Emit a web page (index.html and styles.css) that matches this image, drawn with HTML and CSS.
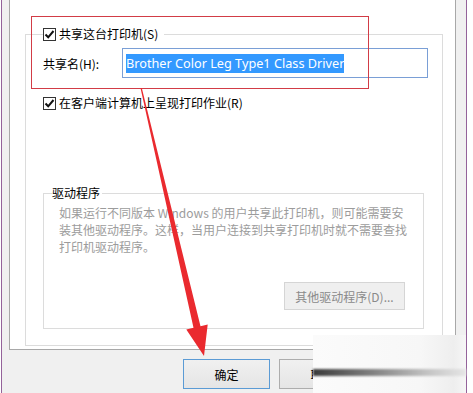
FILE: index.html
```html
<!DOCTYPE html>
<html lang="zh-CN">
<head>
    <meta charset="UTF-8">
    <title>打印机属性 - 共享</title>
    <link rel="stylesheet" href="styles.css">
</head>
<body>
    <div class="screen">
        <div class="dialog">
            <div class="panel">
                <fieldset class="share-frame">
                    <legend class="check">
                        <span class="box"><svg width="11" height="11" viewBox="0 0 11 11"><path d="M1.5 5.5 L4.2 8.3 L9.5 2" fill="none" stroke="#111" stroke-width="2"/></svg></span>
                        共享这台打印机(S)
                    </legend>
                    <div class="name-row">
                        <label class="name-label" for="shareName">共享名(H):</label>
                        <div class="name-input" id="shareName"><span class="selected">Brother Color Leg Type1 Class Driver</span></div>
                    </div>
                    <div class="check render">
                        <span class="box"><svg width="11" height="11" viewBox="0 0 11 11"><path d="M1.5 5.5 L4.2 8.3 L9.5 2" fill="none" stroke="#111" stroke-width="2"/></svg></span>
                        在客户端计算机上呈现打印作业(R)
                    </div>
                    <fieldset class="driver-frame">
                        <legend>驱动程序</legend>
                        <p class="driver-text">如果运行不同版本 Windows 的用户共享此打印机，则可能需要安装其他驱动程序。这样，当用户连接到共享打印机时就不需要查找打印机驱动程序。</p>
                        <div class="driver-actions">
                            <button class="other-btn" disabled>其他驱动程序(D)...</button>
                        </div>
                    </fieldset>
                </fieldset>
            </div>
            <div class="buttons">
                <button class="btn default">确定</button>
                <button class="btn">取消</button>
                <button class="btn">应用(A)</button>
            </div>
        </div>

        <div class="annot-box"></div>
        <svg class="arrow" width="473" height="393" viewBox="0 0 473 393">
            <polygon points="140.5,88 141.8,88 200.5,326.2 207.7,324.4 204,356 186.3,329.6 193.5,327.8" fill="#ea2a2f"/>
        </svg>
        <div class="watermark"><div class="wm-bar"></div></div>
    </div>
</body>
</html>
```

FILE: styles.css
```css
* {
    box-sizing: border-box;
}
body {
    margin: 0;
    background: #fff;
    font-family: "Noto Sans CJK SC", "Noto Sans", sans-serif;
    font-size: 12px;
    color: #000;
    overflow: hidden;
}
.screen {
    position: relative;
    width: 473px;
    height: 393px;
    overflow: hidden;
}
.dialog {
    margin-left: 1px;
    width: 466px;
    height: 393px;
    background: #f0f0f0;
    border-left: 1px solid #94629a;
    border-right: 1px solid #94629a;
    padding-left: 7px;
}
.panel {
    width: 447px;
    height: 350px;
    background: #fff;
    border: 1px solid #a8a8a8;
    border-top: 0;
    padding: 26px 12px 0 15px;
}
.share-frame {
    margin: 0;
    padding: 0 14px 0 17px;
    border: 1px solid #dcdcdc;
    height: 320px;
    min-width: 0;
}
.share-frame > legend {
    padding: 0 6px 0 0;
}
.check {
    display: flex;
    align-items: center;
    gap: 3px;
    height: 16px;
    line-height: 16px;
    white-space: nowrap;
}
.box {
    width: 13px;
    height: 13px;
    border: 1px solid #333;
    background: #fff;
    display: flex;
    align-items: center;
    justify-content: center;
}
.name-row {
    display: flex;
    align-items: center;
    margin-top: 6px;
}
.name-label {
    width: 79px;
}
.name-input {
    width: 306px;
    height: 30px;
    border: 1px solid #7a9fd6;
    padding: 0 3px;
    display: flex;
    align-items: center;
}
.name-input .selected {
    background: #3399ff;
    color: #fff;
    font-family: "Noto Sans", sans-serif;
    font-size: 12.7px;
    line-height: 19px;
    white-space: nowrap;
}
.render {
    margin-top: 17px;
}
.driver-frame {
    margin: 74px 4px 0 0;
    padding: 0 8px;
    border: 1px solid #dcdcdc;
    height: 144px;
    min-width: 0;
}
.driver-frame legend {
    padding: 0 2px 0 0;
    line-height: 16px;
}
.driver-text {
    margin: 3px 0 0 7px;
    width: 354px;
    line-height: 17px;
    color: #9c9c9c;
}
.driver-actions {
    display: flex;
    justify-content: flex-end;
    margin-top: 27px;
    padding-right: 10px;
}
.other-btn {
    width: 121px;
    height: 28px;
    border: 1px solid #d5d5d5;
    background: #efefef;
    color: #8a8a8a;
    font: inherit;
    padding: 0;
}
.buttons {
    display: flex;
    justify-content: flex-end;
    gap: 9px;
    margin-top: 9px;
    padding-right: 4px;
}
.btn {
    width: 87px;
    height: 30px;
    border: 1px solid #adadad;
    background: linear-gradient(#f0f0f0, #e5e5e5);
    font: inherit;
    color: #000;
    padding: 0;
}
.btn.default {
    border-color: #5b9bd5;
}
.annot-box {
    position: absolute;
    left: 31px;
    top: 16px;
    width: 338px;
    height: 73px;
    border: 1px solid #d23c46;
}
.arrow {
    position: absolute;
    left: 0;
    top: 0;
    pointer-events: none;
}
.watermark {
    position: absolute;
    left: 313px;
    top: 335px;
    width: 153px;
    height: 58px;
    background: linear-gradient(90deg, #fbfbfb, #f7f7f7 70%, #eeeeee 92%, #f6f6f6);
}
.wm-bar {
    margin-top: 34px;
    height: 7px;
    background: linear-gradient(90deg, #3a3a3a, #7a7a7a 35%, #c4c4c4 75%, #e6e6e6);
    filter: blur(1px);
}
```
